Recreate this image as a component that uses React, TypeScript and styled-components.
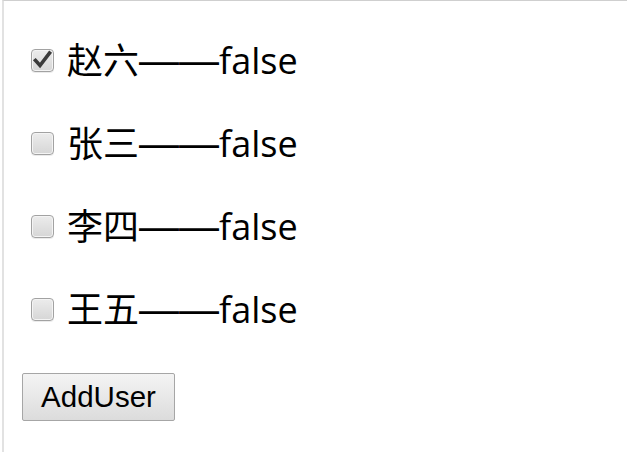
import React, { useState } from "react";
import styled, { createGlobalStyle } from "styled-components";

const Global = createGlobalStyle`
  html, body { margin: 0; padding: 0; background: #fff; }
  body { width: 627px; height: 453px; overflow: hidden; }
`;

const Frame = styled.div`
  margin-left: 2px;
  height: 452px;
  border-top: 1px solid #cfcfcf;
  border-left: 2px solid #e2e2e2;
  box-sizing: border-box;
  padding: 36px 0 0 0;
  display: flex;
  flex-direction: column;
`;

const List = styled.div`
  display: flex;
  flex-direction: column;
  gap: 36px;
  padding-left: 27px;
`;

const Row = styled.label`
  display: flex;
  align-items: center;
  height: 47px;
  font-family: "Open Sans", "Noto Sans CJK SC", sans-serif;
  font-size: 36px;
  color: #000;
  gap: 13px;
`;

const BoxWrap = styled.span`
  position: relative;
  width: 23px;
  height: 23px;
  flex: none;
  margin-top: -1px;
`;

const Box = styled.input`
  appearance: none;
  margin: 0;
  width: 23px;
  height: 23px;
  box-sizing: border-box;
  border: 1px solid #a2a2a2;
  border-radius: 4px;
  background: linear-gradient(#ececec, #d6d6d6);
  box-shadow: inset 0 0 0 1px #f4f4f4, 0 1px 0 rgba(0,0,0,0.08);
  display: block;
`;

const Check = styled.svg`
  position: absolute;
  left: 0;
  top: 0;
  pointer-events: none;
`;

const Label = styled.span`
  white-space: nowrap;
  line-height: 47px;
`;

const Dash = styled.span`
  font-family: "Liberation Sans", Arial, sans-serif;
  font-size: 40px;
  line-height: 1;
`;

const Button = styled.button`
  margin: 40px 0 0 18px;
  align-self: flex-start;
  width: 153px;
  height: 48px;
  box-sizing: border-box;
  border: 1px solid #a6a6a6;
  border-radius: 2px;
  background: linear-gradient(#f4f4f4, #dcdcdc);
  font-family: "Liberation Sans", Arial, sans-serif;
  font-size: 29.5px;
  color: #000;
  padding: 0;
`;

const initial = [
  { name: "赵六", checked: true },
  { name: "张三", checked: false },
  { name: "李四", checked: false },
  { name: "王五", checked: false },
];

export default function App() {
  const [users, setUsers] = useState(initial);
  return (
    <>
      <Global />
      <Frame>
        <List>
          {users.map((u, i) => (
            <Row key={u.name + i}>
              <BoxWrap>
                <Box
                  type="checkbox"
                  checked={u.checked}
                  onChange={() =>
                    setUsers(users.map((x, j) => (j === i ? { ...x, checked: !x.checked } : x)))
                  }
                />
                {u.checked && (
                  <Check width="23" height="23" viewBox="0 0 23 23">
                    <path d="M4.5 11.5 L9 16.5 L18.5 4" fill="none" stroke="#3a3a3a" strokeWidth="3.6" strokeLinecap="square" strokeLinejoin="miter" />
                  </Check>
                )}
              </BoxWrap>
              <Label>
                {u.name}
                <Dash>——</Dash>false
              </Label>
            </Row>
          ))}
        </List>
        <Button onClick={() => setUsers([...users, { name: "新用户", checked: false }])}>AddUser</Button>
      </Frame>
    </>
  );
}
